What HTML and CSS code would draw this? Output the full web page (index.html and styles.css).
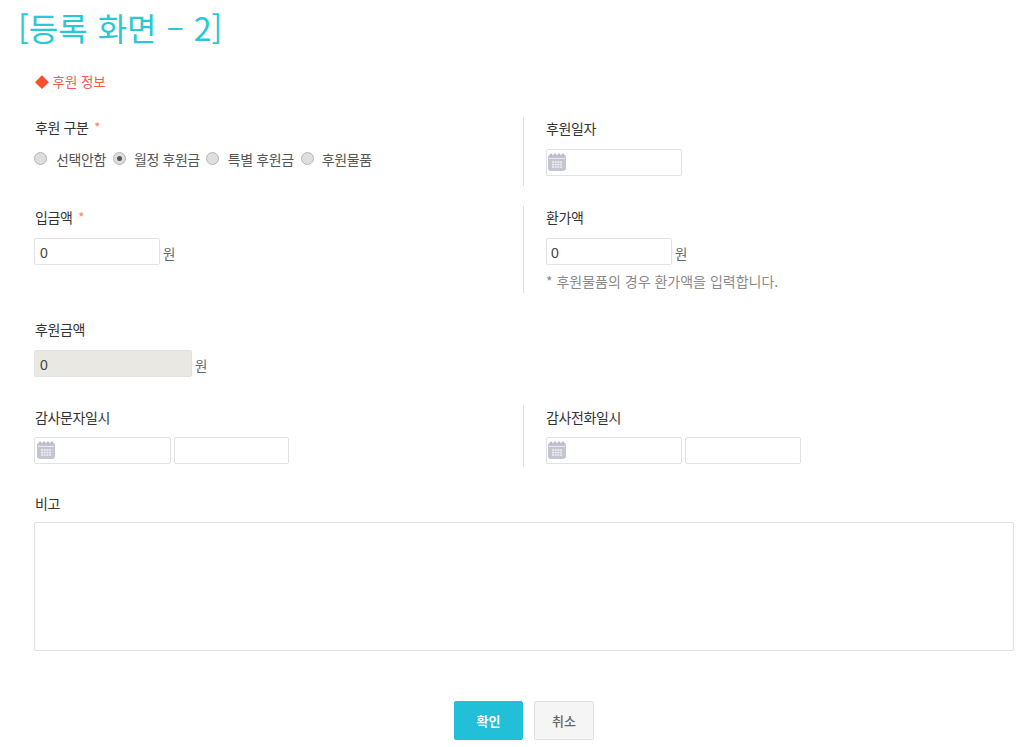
FILE: index.html
```html
<!DOCTYPE html>
<html lang="ko">
<head>
<meta charset="utf-8">
<title>등록 화면 - 2</title>
<link rel="stylesheet" href="styles.css">
</head>
<body>
<svg class="defs" width="0" height="0" aria-hidden="true">
  <symbol id="cal" viewBox="0 0 20 20">
    <rect x="1" y="2.5" width="18" height="16.5" rx="3" fill="#c3c6d0"/>
    <path d="M4 1.5v3M8 1.5v3M12 1.5v3M16 1.5v3" stroke="#b3b6c2" stroke-width="1.6"/>
    <rect x="2" y="6" width="16" height="1" fill="#e6e7ec"/>
    <path d="M5 10h10M5 12.5h10M5 15h10" stroke="#eff0f3" stroke-width="1.4" stroke-dasharray="2 .7"/>
  </symbol>
</svg>
<h1 class="title">[등록 화면 – 2]</h1>
<main class="form">
  <h2 class="section"><span class="diamond">◆</span> 후원 정보</h2>

  <div class="row row-1">
    <section class="cell">
      <div class="label">후원 구분 <span class="req">*</span></div>
      <div class="radios">
        <span class="radio"></span><span class="opt">선택안함</span>
        <span class="radio on"></span><span class="opt">월정 후원금</span>
        <span class="radio"></span><span class="opt">특별 후원금</span>
        <span class="radio"></span><span class="opt">후원물품</span>
      </div>
    </section>
    <section class="cell split">
      <div class="label">후원일자</div>
      <div class="field date"><svg class="cal"><use href="#cal"/></svg></div>
    </section>
  </div>

  <div class="row row-2">
    <section class="cell">
      <div class="label">입금액 <span class="req">*</span></div>
      <div class="line"><div class="field num">0</div><span class="unit">원</span></div>
    </section>
    <section class="cell split">
      <div class="label">환가액</div>
      <div class="line"><div class="field num">0</div><span class="unit">원</span></div>
      <p class="hint">* 후원물품의 경우 환가액을 입력합니다.</p>
    </section>
  </div>

  <div class="row row-3">
    <section class="cell">
      <div class="label">후원금액</div>
      <div class="line"><div class="field num wide off">0</div><span class="unit">원</span></div>
    </section>
  </div>

  <div class="row row-4">
    <section class="cell">
      <div class="label">감사문자일시</div>
      <div class="line tight"><div class="field date"><svg class="cal"><use href="#cal"/></svg></div><div class="field time"></div></div>
    </section>
    <section class="cell split">
      <div class="label">감사전화일시</div>
      <div class="line tight"><div class="field date"><svg class="cal"><use href="#cal"/></svg></div><div class="field time"></div></div>
    </section>
  </div>

  <section class="note">
    <div class="label">비고</div>
    <div class="area"></div>
  </section>

  <div class="actions">
    <button class="btn primary" type="button">확인</button>
    <button class="btn" type="button">취소</button>
  </div>
</main>
</body>
</html>
```
FILE: styles.css
```css
* { box-sizing: border-box; }
html, body { margin: 0; padding: 0; }
body {
  width: 1022px;
  height: 747px;
  overflow: hidden;
  background: #fff;
  font-family: "Noto Sans CJK KR", "Noto Sans", sans-serif;
  color: #333;
  padding-top: 4px;
}
.defs { position: absolute; }
.title {
  margin: 0 0 0 18px;
  height: 47px;
  font-size: 32px;
  line-height: 47px;
  font-weight: 400;
  color: #2bc8d3;
  word-spacing: 1px;
}
.form { padding-left: 34px; width: 1014px; }
.section {
  margin: 20px 0 0 1px;
  height: 20px;
  font-size: 13.5px;
  line-height: 20px;
  font-weight: 400;
  color: #f4594f;
  letter-spacing: -0.1px;
}
.diamond { color: #f4512c; font-size: 14px; }
.row { display: grid; grid-template-columns: 489px 1fr; }
.row-1 { margin-top: 26px; height: 69px; }
.row-2 { margin-top: 20px; height: 87px; }
.row-3 { margin-top: 25px; height: 60px; grid-template-columns: 1fr; }
.row-4 { margin-top: 27px; height: 62px; }
.cell { min-width: 0; }
.split { border-left: 1px solid #dedede; padding-left: 22px; }
.label {
  height: 22px;
  margin-left: 1px;
  font-size: 14px;
  line-height: 22px;
  color: #333;
  letter-spacing: -0.4px;
}
.split .label { margin-left: 0; }
.row-1 .cell:first-child .label { margin-top: -1px; }
.req { color: #f58a63; margin-left: 2px; }
.radios {
  display: flex;
  align-items: center;
  margin-top: 10px;
  height: 20px;
  font-size: 14px;
  letter-spacing: -0.4px;
  color: #555;
}
.radio {
  width: 13px;
  height: 13px;
  border-radius: 50%;
  border: 1px solid #b5b5b5;
  background: #dedede;
  flex: none;
  display: flex;
  align-items: center;
  justify-content: center;
}
.radio.on::after {
  content: "";
  width: 5px;
  height: 5px;
  border-radius: 50%;
  background: #555;
}
.opt { white-space: nowrap; margin-left: 8px; padding-top: 2px; }
.opt:nth-child(2) { margin-left: 9px; margin-right: 7px; }
.opt:nth-child(4) { margin-right: 6px; }
.opt:nth-child(6) { margin-left: 9px; margin-right: 7px; }
.field {
  height: 27px;
  border: 1px solid #e2e2e2;
  border-radius: 2px;
  background: #fff;
  flex: none;
}
.row-1 .split .field { margin-top: 10px; }
.date { width: 137px; padding: 2px 0 0 1px; }
.split .date { width: 136px; padding-left: 0; }
.time { width: 115px; }
.split .time { width: 116px; }
.cal { display: block; width: 20px; height: 20px; }
.line { display: flex; align-items: center; }
.row-2 .line, .row-3 .line { gap: 3px; }
.row-2 .label, .row-3 .label { margin-bottom: 10px; }
.tight { gap: 3px; }
.row-4 .label { margin-top: 1px; margin-bottom: 9px; }
.num {
  width: 126px;
  padding: 1px 0 0 5px;
  font-family: "Liberation Sans", sans-serif;
  font-size: 14px;
  line-height: 27px;
  color: #444;
}
.split .num { padding-left: 4px; }
.wide { width: 158px; }
.off { background: #e9e8e3; }
.unit { font-size: 13.5px; color: #666; margin-top: 3px; }
.hint {
  margin: 6px 0 0;
  font-size: 14px;
  line-height: 20px;
  letter-spacing: 0;
  color: #8a8a8a;
}
.note { margin-top: 25px; }
.area {
  margin-top: 8px;
  width: 980px;
  height: 129px;
  border: 1px solid #e0e0e0;
  border-radius: 2px;
}
.actions {
  display: flex;
  gap: 11px;
  margin-top: 50px;
  padding-left: 420px;
}
.btn {
  height: 39px;
  width: 60px;
  border: 1px solid #e0e0e0;
  border-radius: 2px;
  background: #f5f5f5;
  font-family: inherit;
  font-size: 13px;
  font-weight: 500;
  color: #666;
  padding: 0;
}
.btn.primary {
  width: 69px;
  background: #22bfd9;
  border-color: #22bfd9;
  color: #fff;
  font-weight: 700;
}
```
